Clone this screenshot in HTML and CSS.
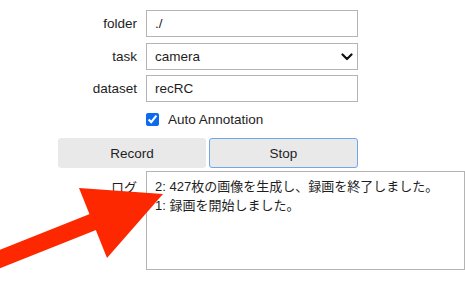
FILE: index.html
```html
<!DOCTYPE html>
<html lang="ja">
<head>
    <meta charset="UTF-8">
    <meta name="viewport" content="width=device-width, initial-scale=1.0">
    <title>Recorder</title>
    <link rel="stylesheet" href="styles.css">
</head>
<body>
<div class="form">
    <div class="row first">
        <label class="label" for="folder">folder</label>
        <input class="field" type="text" id="folder" value="./">
    </div>
    <div class="row">
        <label class="label" for="task">task</label>
        <div class="select-wrap">
            <select class="field" id="task">
                <option>camera</option>
            </select>
            <svg class="chevron" width="12" height="8" viewBox="0 0 12 8">
                <path d="M1.5 1.5 L6 6 L10.5 1.5" fill="none" stroke="#111" stroke-width="2.2" stroke-linecap="round" stroke-linejoin="round"/>
            </svg>
        </div>
    </div>
    <div class="row">
        <label class="label" for="dataset">dataset</label>
        <input class="field" type="text" id="dataset" value="recRC">
    </div>
    <div class="row check-row">
        <span class="label"></span>
        <label class="check"><input type="checkbox" checked> Auto Annotation</label>
    </div>
    <div class="buttons">
        <button class="btn">Record</button>
        <button class="btn active">Stop</button>
    </div>
    <div class="row log-row">
        <label class="label" for="log">ログ</label>
        <textarea class="log" id="log">2: 427枚の画像を生成し、録画を終了しました。
1: 録画を開始しました。</textarea>
    </div>
</div>

<svg class="arrow" width="465" height="295" viewBox="0 0 465 295">
    <line x1="-10" y1="263" x2="118" y2="212" stroke="#fe2800" stroke-width="17"/>
    <polygon points="79,188 163,194 107,258" fill="#fe2800"/>
</svg>
</body>
</html>
```

FILE: styles.css
```css
body {
    margin: 0;
    padding: 0;
    background: #fff;
    font-family: "Liberation Sans", Arial, "Noto Sans CJK JP", sans-serif;
    font-size: 13.5px;
    color: #1e1e1e;
    overflow: hidden;
}
.form {
    display: flex;
    flex-direction: column;
    padding-top: 10px;
}
.row {
    display: flex;
    align-items: center;
    gap: 9px;
    margin-bottom: 5px;
}
.row.first {
    margin-bottom: 6px;
}
.label {
    width: 137px;
    text-align: right;
    flex-shrink: 0;
}
.field {
    box-sizing: border-box;
    width: 212px;
    height: 27px;
    margin: 0;
    padding: 0 8px;
    border: 1px solid #b4b4b4;
    border-radius: 0;
    background: #fff;
    font: inherit;
    color: #1e1e1e;
    outline: none;
}
.select-wrap {
    position: relative;
    width: 212px;
    height: 27px;
}
.select-wrap select {
    appearance: none;
    -webkit-appearance: none;
}
.chevron {
    position: absolute;
    right: 5px;
    top: 10px;
    pointer-events: none;
}
.check-row {
    height: 20px;
    margin-top: 2px;
    margin-bottom: 9px;
}
.check {
    display: flex;
    align-items: center;
    gap: 9px;
}
.check input {
    margin: 0;
    width: 13px;
    height: 13px;
    accent-color: #0b6af0;
}
.buttons {
    display: flex;
    gap: 3px;
    margin-left: 58px;
    margin-bottom: 3px;
}
.btn {
    box-sizing: border-box;
    width: 148px;
    height: 30px;
    margin: 0;
    border: 1px solid #e9e9e9;
    border-radius: 3px;
    background: #e9e9e9;
    font: inherit;
    color: #1e1e1e;
}
.btn.active {
    width: 149px;
    border-color: #6ea8ea;
}
.log-row {
    align-items: flex-start;
}
.log-row .label {
    padding-top: 6px;
    font-size: 13px;
}
.log {
    box-sizing: border-box;
    width: 330px;
    height: 99px;
    margin: 0;
    padding: 5px 8px;
    border: 1px solid #b4b4b4;
    font-family: "Liberation Sans", Arial, "Noto Sans CJK JP", sans-serif;
    font-size: 13px;
    line-height: 19px;
    color: #1e1e1e;
    resize: none;
    outline: none;
}
.arrow {
    position: absolute;
    left: 0;
    top: 0;
    pointer-events: none;
}
```
